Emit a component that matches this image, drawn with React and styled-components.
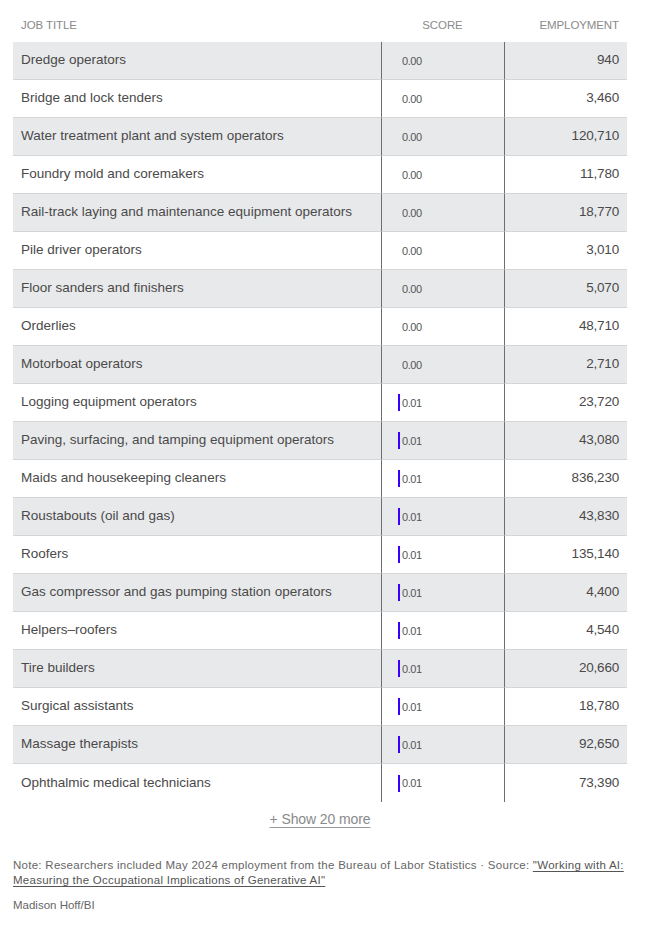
import React from "react";
import styled, { createGlobalStyle } from "styled-components";

const Global = createGlobalStyle`
  html, body { margin: 0; padding: 0; background: #fff; }
  body { font-family: "Liberation Sans", Arial, sans-serif; }
`;

const rows = [
  ["Dredge operators", 0, "940"],
  ["Bridge and lock tenders", 0, "3,460"],
  ["Water treatment plant and system operators", 0, "120,710"],
  ["Foundry mold and coremakers", 0, "11,780"],
  ["Rail-track laying and maintenance equipment operators", 0, "18,770"],
  ["Pile driver operators", 0, "3,010"],
  ["Floor sanders and finishers", 0, "5,070"],
  ["Orderlies", 0, "48,710"],
  ["Motorboat operators", 0, "2,710"],
  ["Logging equipment operators", 0.01, "23,720"],
  ["Paving, surfacing, and tamping equipment operators", 0.01, "43,080"],
  ["Maids and housekeeping cleaners", 0.01, "836,230"],
  ["Roustabouts (oil and gas)", 0.01, "43,830"],
  ["Roofers", 0.01, "135,140"],
  ["Gas compressor and gas pumping station operators", 0.01, "4,400"],
  ["Helpers\u2013roofers", 0.01, "4,540"],
  ["Tire builders", 0.01, "20,660"],
  ["Surgical assistants", 0.01, "18,780"],
  ["Massage therapists", 0.01, "92,650"],
  ["Ophthalmic medical technicians", 0.01, "73,390"],
];

const Page = styled.div`
  padding: 0 38px 0 13px;
  color: #333;
`;

const Table = styled.div`
  display: grid;
  grid-template-columns: 368px 123px 123px;
`;

const HeadCell = styled.div`
  height: 42px;
  box-sizing: border-box;
  padding: 18px 8px 0;
  font-size: 11.5px;
  line-height: 14px;
  color: #8a8a8a;
  letter-spacing: -0.1px;
  text-align: ${(p) => p.$align || "left"};
`;

const Cell = styled.div`
  height: 38px;
  box-sizing: border-box;
  display: flex;
  align-items: center;
  background: ${(p) => (p.$shade ? "#e8e9eb" : "#fff")};
  border-bottom: ${(p) => (p.$last ? "none" : "1px solid #d4d5d7")};
  border-left: ${(p) => (p.$divider ? "1px solid #6e6e6e" : "none")};
`;

const TitleCell = styled(Cell)`
  padding: 0 8px 2px;
  font-size: 13.5px;
  letter-spacing: 0;
  color: #4a4a4a;
`;

const ScoreCell = styled(Cell)`
  padding-left: 16px;
  font-size: 11px;
  letter-spacing: -0.4px;
  color: #555;
`;

const Bar = styled.span`
  display: inline-block;
  height: 17px;
  background: #3a00ff;
  margin-right: 2px;
`;

const ScoreText = styled.span`
  padding-left: 4px;
`;

const EmpCell = styled(Cell)`
  justify-content: flex-end;
  padding: 0 8px 2px;
  font-size: 13.5px;
  letter-spacing: -0.2px;
  color: #4a4a4a;
`;

const ShowMore = styled.div`
  text-align: center;
  padding-top: 8px;
`;

const ShowLink = styled.span`
  font-size: 14px;
  letter-spacing: -0.1px;
  color: #8a8a8a;
  text-decoration: underline;
  text-underline-offset: 3px;
  text-decoration-color: #9a9a9a;
`;

const Note = styled.p`
  margin: 30px 0 0;
  font-size: 11.5px;
  line-height: 15px;
  letter-spacing: 0.27px;
  color: #666;
`;

const SourceLink = styled.a`
  color: #555;
  text-decoration: underline;
  text-underline-offset: 2px;
`;

const Credit = styled.p`
  margin: 10px 0 0;
  font-size: 11.5px;
  line-height: 14px;
  letter-spacing: 0;
  color: #666;
`;

export default function App() {
  return (
    <Page>
      <Global />
      <Table>
        <HeadCell>JOB TITLE</HeadCell>
        <HeadCell $align="center">SCORE</HeadCell>
        <HeadCell $align="right">EMPLOYMENT</HeadCell>
        {rows.map(([title, score, emp], i) => {
          const shade = i % 2 === 0;
          const last = i === rows.length - 1;
          return (
            <React.Fragment key={title}>
              <TitleCell $shade={shade} $last={last}>{title}</TitleCell>
              <ScoreCell $shade={shade} $last={last} $divider>
                {score > 0 && <Bar style={{ width: `${score * 200}px` }} />}
                <ScoreText style={{ paddingLeft: score > 0 ? 0 : 4 }}>
                  {score.toFixed(2)}
                </ScoreText>
              </ScoreCell>
              <EmpCell $shade={shade} $last={last} $divider>{emp}</EmpCell>
            </React.Fragment>
          );
        })}
      </Table>
      <ShowMore>
        <ShowLink>+ Show 20 more</ShowLink>
      </ShowMore>
      <Note>
        Note: Researchers included May 2024 employment from the Bureau of Labor Statistics · Source:{" "}
        <SourceLink>"Working with AI: Measuring the Occupational Implications of Generative AI"</SourceLink>
      </Note>
      <Credit>Madison Hoff/BI</Credit>
    </Page>
  );
}
